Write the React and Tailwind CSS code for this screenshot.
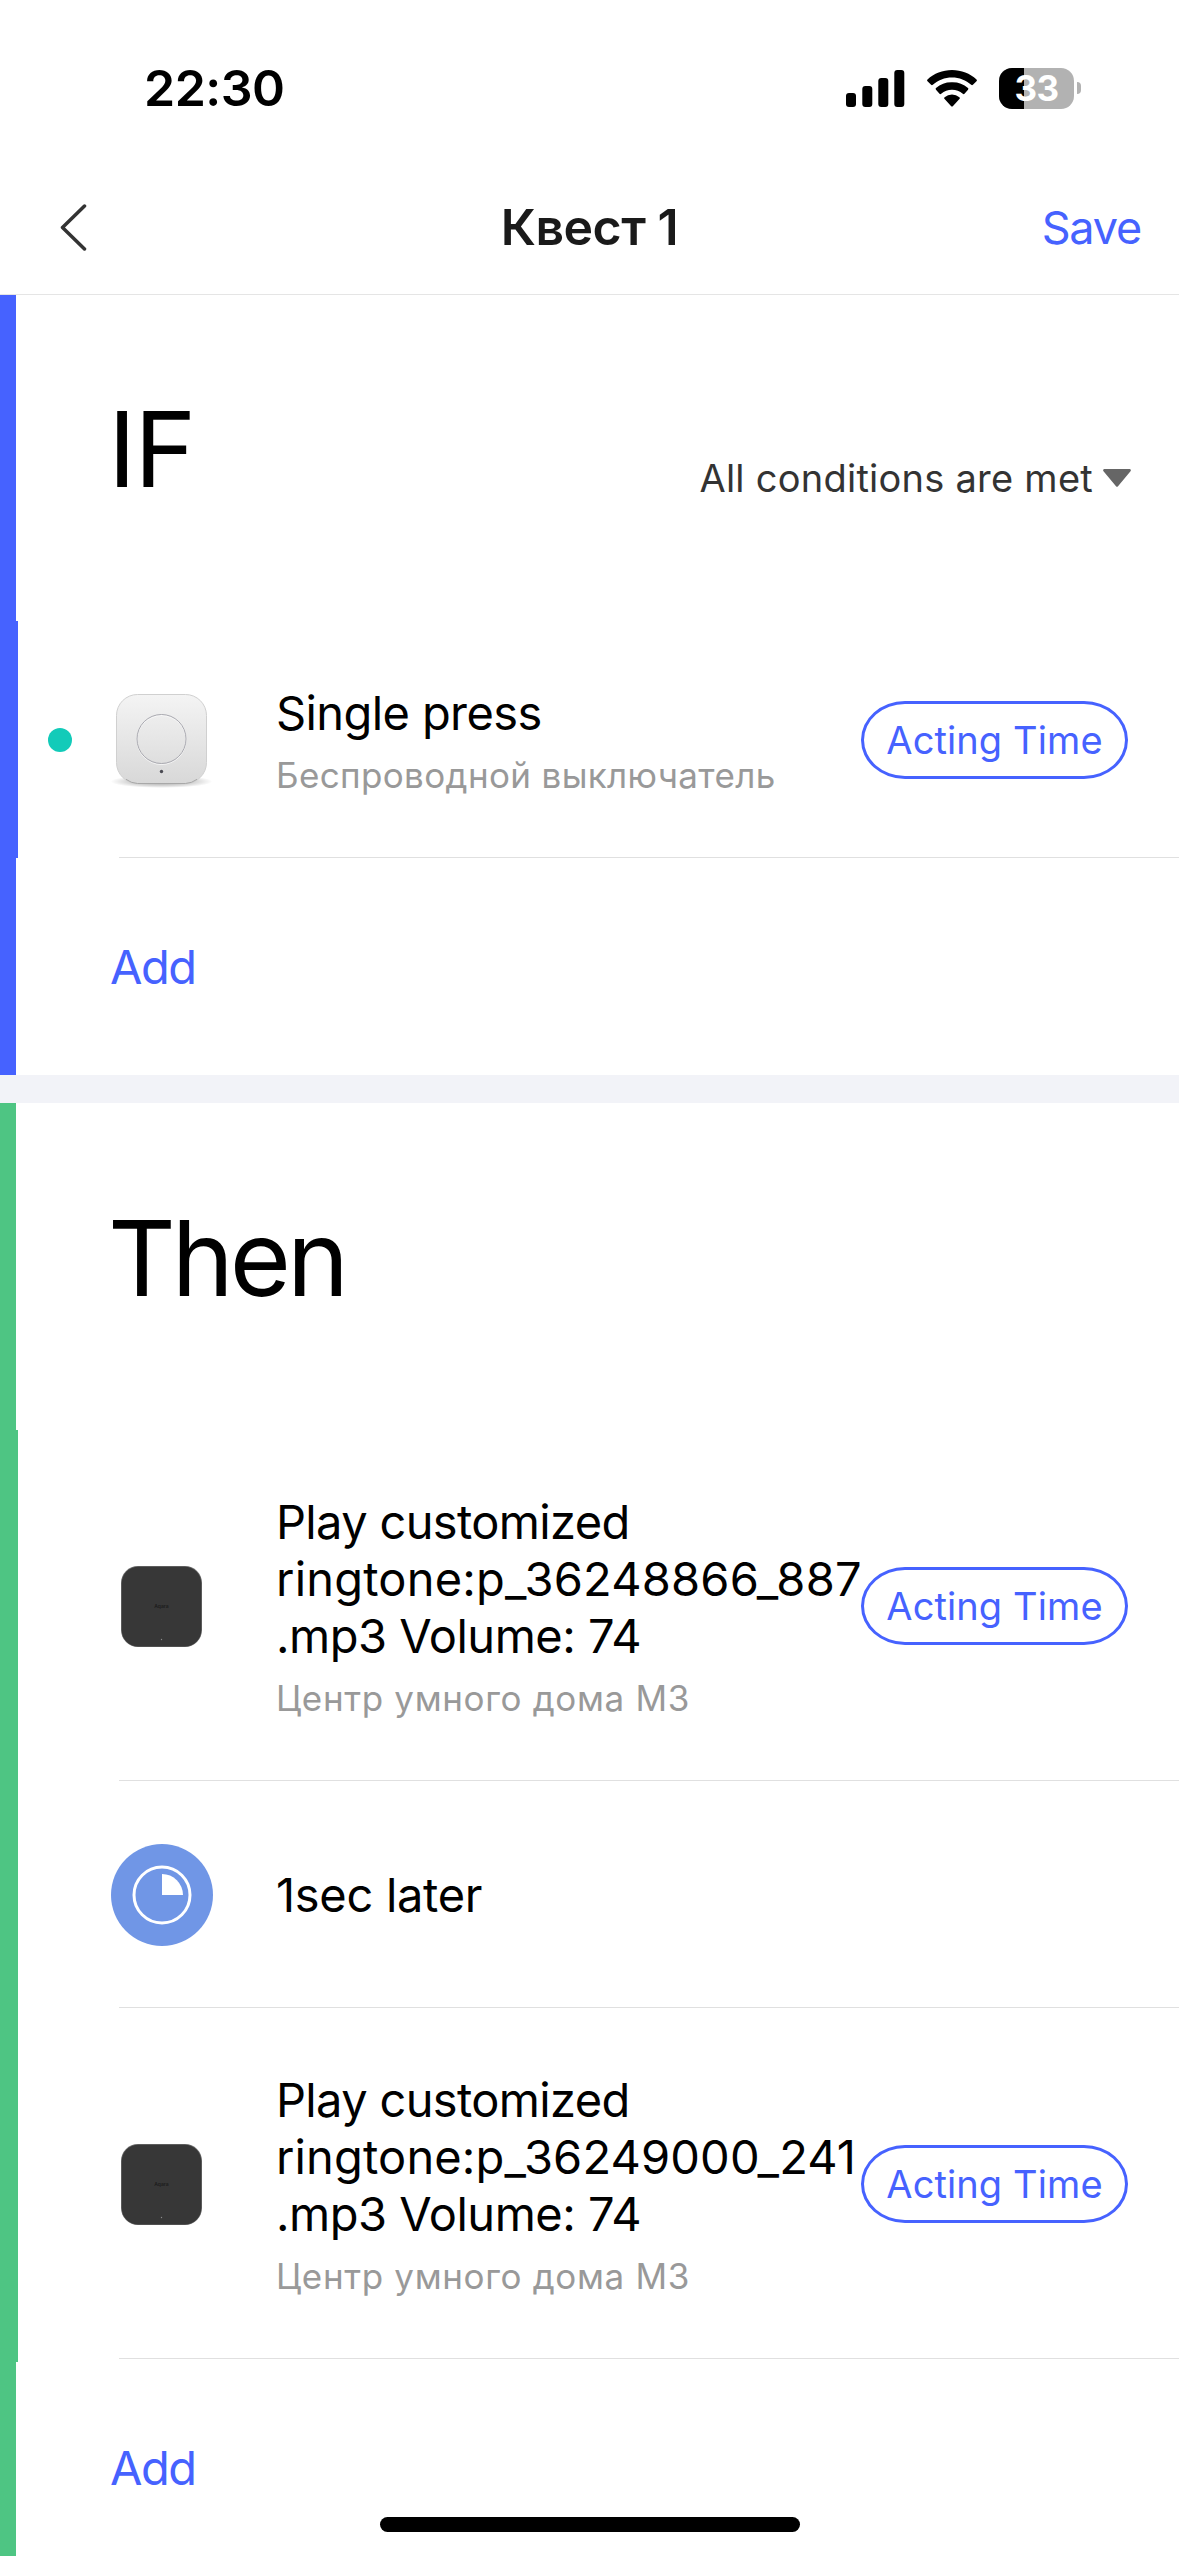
import { useState } from 'react';

const conditions = [
  {
    id: 1,
    icon: 'switch',
    lines: [{ text: 'Single press', tracking: 'tracking-[-0.6px]' }],
    device: 'Беспроводной выключатель',
    deviceTracking: 'tracking-[0.35px]',
    online: true,
    height: 'h-[237px]',
  },
];

const actions = [
  {
    id: 1,
    icon: 'hub',
    lines: [
      { text: 'Play customized', tracking: 'tracking-[-0.65px]' },
      { text: 'ringtone:p_36248866_887', tracking: 'tracking-[0.2px]' },
      { text: '.mp3 Volume: 74', tracking: 'tracking-[-0.5px]' },
    ],
    device: 'Центр умного дома M3',
    deviceTracking: 'tracking-[0.65px]',
    height: 'h-[351px]',
  },
  {
    id: 2,
    icon: 'timer',
    lines: [{ text: '1sec later', tracking: 'tracking-[-0.3px]' }],
    height: 'h-[227px]',
  },
  {
    id: 3,
    icon: 'hub',
    lines: [
      { text: 'Play customized', tracking: 'tracking-[-0.65px]' },
      { text: 'ringtone:p_36249000_241', tracking: 'tracking-[0.15px]' },
      { text: '.mp3 Volume: 74', tracking: 'tracking-[-0.5px]' },
    ],
    device: 'Центр умного дома M3',
    deviceTracking: 'tracking-[0.65px]',
    height: 'h-[351px]',
  },
];

function SwitchIcon() {
  return (
    <svg width="102" height="102" viewBox="0 0 102 102" fill="none">
      <defs>
        <linearGradient id="switchBody" x1="0" y1="0" x2="0" y2="1">
          <stop offset="0" stopColor="#f4f4f4" />
          <stop offset="1" stopColor="#d8d8d8" />
        </linearGradient>
        <radialGradient id="switchShadow">
          <stop offset="0" stopColor="#000" stopOpacity="0.4" />
          <stop offset="0.7" stopColor="#000" stopOpacity="0.14" />
          <stop offset="1" stopColor="#000" stopOpacity="0" />
        </radialGradient>
      </defs>
      <ellipse cx="50.5" cy="92.5" rx="51" ry="6.5" fill="url(#switchShadow)" />
      <rect x="5.5" y="5.5" width="90" height="89" rx="21" fill="url(#switchBody)" stroke="#d0d0d0" />
      <path d="M15 90.3a21 21 0 0 0 11.5 4.200h48a21 21 0 0 0 11.500-4.200" stroke="#a8a8a8" />
      <circle cx="50.5" cy="51" r="24.500" stroke="#fff" strokeOpacity="0.7" />
      <circle cx="50.5" cy="50" r="24.500" stroke="#a9a9b0" />
      <circle cx="50.5" cy="82.500" r="1.700" fill="#4a4a52" />
    </svg>
  );
}

function HubIcon() {
  return (
    <svg width="102" height="102" viewBox="0 0 102 102">
      <rect x="10" y="11" width="81" height="81" rx="17" fill="#6b6b6b" />
      <rect x="10.7" y="11.7" width="79.600" height="79.900" rx="16.500" fill="#373737" />
      <text x="50.5" y="53" textAnchor="middle" fontSize="5" fontWeight="600" fill="#1c1c1c" className="font-['Inter',sans-serif]">Aqara</text>
      <circle cx="50.5" cy="84.500" r="0.700" fill="#8a8a8a" />
    </svg>
  );
}

function TimerIcon() {
  return (
    <svg width="102" height="102" viewBox="0 0 102 102" fill="none">
      <circle cx="51" cy="51" r="51" fill="#7096e6" />
      <circle cx="51" cy="51" r="28" stroke="#fff" strokeWidth="3" />
      <path d="M51 51V30a21 21 0 0 1 21 21z" fill="#fff" />
    </svg>
  );
}

const ICONS = { switch: SwitchIcon, hub: HubIcon, timer: TimerIcon };

function StatusBar() {
  return (
    <div className="flex h-[160px] items-center justify-between pl-[144px] pr-[97px] pt-4">
      <span className="text-[50px] font-semibold leading-none tracking-[-0.5px] text-black">22:30</span>
      <div className="flex items-center">
        <svg width="59" height="37" viewBox="0 0 59 37">
          <rect x="0" y="23" width="10" height="14" rx="3" />
          <rect x="16.300" y="16" width="10" height="21" rx="3" />
          <rect x="32.300" y="8" width="10" height="29" rx="3" />
          <rect x="48.300" y="0" width="10" height="37" rx="3" />
        </svg>
        <svg width="50" height="37" viewBox="0 0 50 37" className="ml-[22px]">
          <path d="M.500 11.200a1.200 1.200 0 0 1 0-1.700C7 3.500 15.600 0 25 0s18 3.500 24.500 9.500a1.200 1.200 0 0 1 0 1.700l-3.600 3.600a1.200 1.200 0 0 1-1.700 0C39 10.200 32.300 7.500 25 7.500S11 10.200 5.800 14.800a1.200 1.200 0 0 1-1.700 0z" />
          <path d="M9 19.700a1.200 1.200 0 0 1 0-1.700A23.600 23.600 0 0 1 25 12.300 23.600 23.600 0 0 1 41 18a1.200 1.200 0 0 1 0 1.700l-3.500 4.100a1.200 1.200 0 0 1-1.700 0A16.200 16.200 0 0 0 25 19.700a16.200 16.200 0 0 0-10.800 4.100 1.200 1.200 0 0 1-1.700 0z" />
          <path d="M17.600 29a1.200 1.200 0 0 1 0-1.700 11.500 11.500 0 0 1 14.800 0 1.200 1.200 0 0 1 0 1.700l-6.600 7.200a1.100 1.100 0 0 1-1.600 0z" />
        </svg>
        <div className="relative ml-[22px] flex h-[41px] w-[75px] items-center justify-center overflow-hidden rounded-[13px] bg-[#b2b2b2]">
          <div className="absolute inset-y-0 left-0 w-[25px] bg-black" />
          <span className="relative text-[35px] font-bold leading-none tracking-[-0.5px] text-white">33</span>
        </div>
        <div className="ml-[3px] mr-px h-[12px] w-[4px] rounded-r-full bg-[#b2b2b2]" />
      </div>
    </div>
  );
}

function NavBar({ title }) {
  return (
    <div className="relative z-10 grid h-[135px] grid-cols-3 items-center border-b border-[#e5e5e5] pl-[60px] pr-[38px]">
      <button>
        <svg width="27" height="48" viewBox="0 0 27 48" fill="none" stroke="#333" strokeWidth="3.500" strokeLinecap="round" strokeLinejoin="round">
          <path d="M24.500 3 2.500 24.500l22 21.500" />
        </svg>
      </button>
      <h1 className="-ml-[22px] whitespace-nowrap text-center text-[50px] font-semibold leading-none tracking-[-0.5px] text-[#1a1a1a]">{title}</h1>
      <button className="text-right text-[45px] leading-none tracking-[-1.2px] text-[#4662ff]">Save</button>
    </div>
  );
}

function RuleRow({ item, bar }) {
  const Icon = ICONS[item.icon];
  return (
    <div className={`flex flex-col border-l-[18px] ${bar} ${item.height}`}>
      <div className="flex flex-1 items-center pr-[51px] pt-[2px]">
        <div className="flex w-[93px] shrink-0 pl-[30px]">
          {item.online && <span className="size-6 rounded-full bg-[#12cbb9]" />}
        </div>
        <div className="size-[102px] shrink-0">
          <Icon />
        </div>
        <div className="-mt-0.5 min-w-0 flex-1 pl-[63px]">
          {item.lines.map((line) => (
            <p key={line.text} className={`whitespace-nowrap text-[47px] leading-[57px] text-black ${line.tracking}`}>{line.text}</p>
          ))}
          {item.device && <p className={`mt-[14px] whitespace-nowrap text-[35px] leading-[40px] text-[#999] ${item.deviceTracking}`}>{item.device}</p>}
        </div>
        {item.device && (
          <button className="h-[78px] w-[267px] shrink-0 rounded-[44px/39px] border-[3px] border-[#4662ff] text-[38px] leading-none tracking-[0.1px] text-[#4662ff]">Acting Time</button>
        )}
      </div>
      <div className="ml-[101px] h-px bg-[#e0e0e0]" />
    </div>
  );
}

function RuleSection({ title, titleTracking, items, bar, extra, children }) {
  return (
    <section>
      <div className={`flex h-[327px] items-start justify-between border-l-[16px] pl-[92px] pr-[48px] pt-[101px] ${bar}`}>
        <h2 className={`text-[105px] leading-[108px] text-black ${titleTracking}`}>{title}</h2>
        {extra}
      </div>
      {items.map((item) => (
        <RuleRow key={item.id} item={item} bar={bar} />
      ))}
      {children}
      <div className={`flex h-[217px] items-center border-l-[16px] pl-[94px] ${bar}`}>
        <button className="text-[47px] leading-none tracking-[-1.5px] text-[#4662ff]">Add</button>
      </div>
    </section>
  );
}

export default function App() {
  const [matchMode] = useState('All conditions are met');

  return (
    <div className="relative h-[2556px] w-[1179px] overflow-hidden bg-white font-['Inter',sans-serif]">
      <StatusBar />
      <NavBar title="Квест 1" />
      <div className="-mt-px">
        <RuleSection
          title="IF"
          titleTracking="tracking-[-2px]"
          items={conditions}
          bar="border-l-[#4662ff]"
          extra={
            <button className="mt-[60px] flex items-center gap-[10px] text-[38px] leading-[47px] tracking-[0.25px] text-[#333]">
              {matchMode}
              <svg width="28" height="18" viewBox="0 0 28 18" fill="#666" className="-mt-[1px]">
                <path d="M1.500 0h25a1.300 1.300 0 0 1 1 2.200L15 17.200a1.300 1.300 0 0 1-2 0L.500 2.200A1.300 1.300 0 0 1 1.500 0z" />
              </svg>
            </button>
          }
        />
        <div className="h-7 bg-[#f2f3f8]" />
        <RuleSection title="Then" titleTracking="tracking-[-4px]" items={actions} bar="border-l-[#4ec583]">
          <div className="-mb-[3px] h-[3px] border-l-[18px] border-l-[#4ec583]" />
        </RuleSection>
      </div>
      <div className="absolute bottom-6 left-[380px] h-[15px] w-[420px] rounded-full bg-black" />
    </div>
  );
}
